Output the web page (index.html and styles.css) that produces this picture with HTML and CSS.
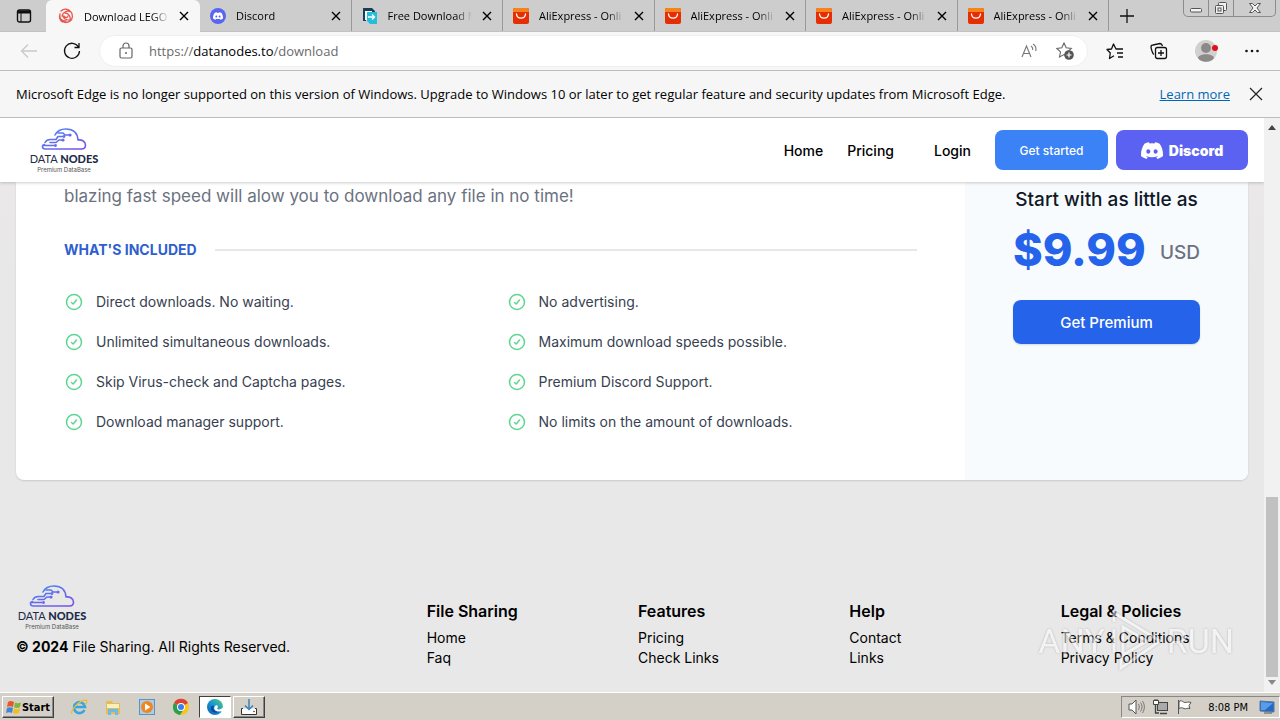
FILE: index.html
```html
<!DOCTYPE html>
<html lang="en">
<head>
<meta charset="utf-8">
<title>Download</title>
<meta name="viewport" content="width=device-width, initial-scale=1">
<link rel="stylesheet" href="styles.css">
</head>
<body>
<svg class="defs" aria-hidden="true">
  <defs>
    <linearGradient id="cloudGrad" x1="0" x2="1" y1="0" y2="1"><stop offset="0" stop-color="#4b8cf5"/><stop offset="1" stop-color="#7a4fe8"/></linearGradient>
    <linearGradient id="edgeGrad" x1="0" x2="1" y1="1" y2="0"><stop offset="0" stop-color="#0b5ab5"/><stop offset=".5" stop-color="#1795d8"/><stop offset="1" stop-color="#5ad06a"/></linearGradient>
  </defs>
  <symbol id="cloud" viewBox="0 0 46 22">
    <g fill="none" stroke="url(#cloudGrad)" stroke-width="1.600" stroke-linecap="round" stroke-linejoin="round">
      <path d="M14 7C16 3 20 1 25 1c7 0 11.500 4 12 11 4-.5 7.500 1.500 7.500 5 0 2.500-1.500 4-4 4H4c-3 0-3.500-4-.5-4.500"/>
      <path d="M2.500 17.500h12M4 14.500c1-2 3-3 5.500-3H15l2-3h5M9 14.500h6l3-2.500h4M17 5h5l2 2h5"/>
      <circle cx="23" cy="8.500" r=".6"/><circle cx="29" cy="7" r=".8"/><circle cx="22" cy="12" r=".8"/><circle cx="14.500" cy="17.500" r=".6"/>
    </g>
  </symbol>
  <symbol id="discord" viewBox="0 0 24 18">
    <path fill="currentColor" fill-rule="evenodd" d="M20.300 1.500A19.800 19.800 0 0 0 15.400 0l-.7 1.300a18.300 18.300 0 0 0-5.400 0L8.600 0a19.700 19.700 0 0 0-4.900 1.500C.6 6.200-.3 10.700.1 15.200a19.900 19.900 0 0 0 6 3l1.300-2-1.900-1 .4-.3c4 1.800 8.200 1.800 12.200 0l.4.300-1.900 1 1.300 2a19.800 19.800 0 0 0 6-3c.5-5.200-.8-9.700-3.600-13.700zM8 12.500c-1.200 0-2.200-1.100-2.200-2.500S6.800 7.600 8 7.600s2.200 1.100 2.200 2.400-1 2.500-2.200 2.500zm8 0c-1.200 0-2.200-1.100-2.200-2.500s1-2.400 2.200-2.400 2.200 1.100 2.200 2.400-1 2.500-2.200 2.500z"/>
  </symbol>
  <symbol id="close" viewBox="0 0 10 10"><path d="M1 1l8 8M9 1L1 9" fill="none" stroke="currentColor" stroke-width="1.400"/></symbol>
  <symbol id="ali" viewBox="0 0 16 16"><rect width="16" height="16" rx="2" fill="#e62e04"/><path d="M2 0h12a2 2 0 0 1 2 2v2H0V2a2 2 0 0 1 2-2z" fill="#f5841c"/><path d="M3.500 6c.5 5.500 8.500 5.500 9 0" fill="none" stroke="#fff" stroke-width="1.300" stroke-linecap="round"/></symbol>
  <symbol id="check" viewBox="0 0 20 20"><g fill="none" stroke="#5fd592" stroke-width="1.500" stroke-linecap="round" stroke-linejoin="round"><circle cx="10" cy="10" r="7.500"/><path d="M7.500 10.500l1.700 1.500 3.300-4"/></g></symbol>
</svg>

<div class="tabbar">
  <button class="tab-menu" aria-label="Tab actions"><svg width="16" height="16" viewBox="0 0 16 16"><rect x="1.500" y="2" width="13" height="12" rx="2" fill="none" stroke="#111" stroke-width="1.400"/><path d="M2 3h12v2H2zM5 5v9" fill="#111" stroke="#111"/></svg></button>
  <div class="tabs">
    <div class="tab active">
      <svg class="favicon" viewBox="0 0 16 16"><g fill="none" stroke="#e8564c" stroke-width="1.300" stroke-linecap="round"><path d="M3 3c3-3 8-2 10 1-4-2-8 0-9 4M1.500 8c0 3 1 5 3 6M13 4c2 3 2 7-1 9 1-4-1-8-5-8M6 14c3 1 6 0 8-3-3 2-8 1-9-3M2 6c-1 5 2 7 6 7M10 8c0 2-3 2-4 0M1.500 10c1 2 3 4 6 4.500"/></g></svg>
      <span class="tab-title">Download LEGO</span><button class="tab-close" aria-label="Close tab"><svg><use href="#close"/></svg></button>
    </div>
    <div class="tab">
      <svg class="favicon" viewBox="0 0 16 16"><circle cx="8" cy="8" r="8" fill="#5865f2"/><svg class="white" x="3" y="4" width="10" height="8"><use href="#discord"/></svg></svg>
      <span class="tab-title">Discord</span><button class="tab-close" aria-label="Close tab"><svg><use href="#close"/></svg></button>
    </div>
    <div class="tab">
      <svg class="favicon" viewBox="0 0 16 16"><path d="M1 0h9l3 3v2H4v8H1z" fill="#173f5c"/><path d="M3 3h7v2H5v7H3z" fill="#fff"/><path d="M5 4h10v12H8l-3-3z" fill="#23bfd8"/><path d="M6 9h7M10 6.500L12.500 9 10 11.500" fill="none" stroke="#fff" stroke-width="1.300"/></svg>
      <span class="tab-title">Free Download M</span><button class="tab-close" aria-label="Close tab"><svg><use href="#close"/></svg></button>
    </div>
    <div class="tab"><svg class="favicon"><use href="#ali"/></svg><span class="tab-title">AliExpress - Onli</span><button class="tab-close" aria-label="Close tab"><svg><use href="#close"/></svg></button></div>
    <div class="tab"><svg class="favicon"><use href="#ali"/></svg><span class="tab-title">AliExpress - Onli</span><button class="tab-close" aria-label="Close tab"><svg><use href="#close"/></svg></button></div>
    <div class="tab"><svg class="favicon"><use href="#ali"/></svg><span class="tab-title">AliExpress - Onli</span><button class="tab-close" aria-label="Close tab"><svg><use href="#close"/></svg></button></div>
    <div class="tab"><svg class="favicon"><use href="#ali"/></svg><span class="tab-title">AliExpress - Onli</span><button class="tab-close" aria-label="Close tab"><svg><use href="#close"/></svg></button></div>
  </div>
  <button class="new-tab" aria-label="New tab"><svg width="14" height="14" viewBox="0 0 14 14"><path d="M7 0v14M0 7h14" stroke="#111" stroke-width="1.300"/></svg></button>
  <div class="win-controls">
    <button aria-label="Minimize"><svg width="14" height="16" viewBox="0 0 14 16"><rect x="1.500" y="8.500" width="11" height="3.500" rx="1" fill="#f4f4f4" stroke="#555"/></svg></button>
    <button aria-label="Restore"><svg width="14" height="16" viewBox="0 0 14 16"><g fill="#f0f0f0" stroke="#555"><rect x="4.500" y="2.500" width="8" height="8" rx="1"/><rect x="1.500" y="5.500" width="8" height="8" rx="1"/><rect x="4" y="8" width="3" height="3"/></g></svg></button>
    <button class="wide" aria-label="Close"><svg width="14" height="16" viewBox="0 0 14 16"><path d="M1.500 3.500h3L7 6l2.500-2.500h3L9 8l3.500 4.500h-3L7 10l-2.500 2.500h-3L5 8z" fill="#f4f4f4" stroke="#555"/></svg></button>
  </div>
</div>

<div class="toolbar">
  <button class="tool back" aria-label="Back"><svg width="18" height="16" viewBox="0 0 18 16"><path d="M17 8H2M8 1.500L1.500 8 8 14.500" fill="none" stroke="#c9c9c9" stroke-width="1.300"/></svg></button>
  <button class="tool reload" aria-label="Reload"><svg width="18" height="18" viewBox="0 0 18 18"><path d="M15.500 5A7.500 7.500 0 1 0 16.500 9M16 1v4.500h-4.500" fill="none" stroke="#111" stroke-width="1.300"/></svg></button>
  <div class="address">
    <svg width="14" height="18" viewBox="0 0 14 18"><g fill="none" stroke="#666" stroke-width="1.200"><rect x="1" y="6" width="12" height="10" rx="1.500"/><path d="M4 6V4a3 3 0 0 1 6 0v2"/></g><circle cx="7" cy="11" r="1" fill="#666"/></svg>
    <div class="url" role="textbox" aria-label="Address">https://<b>datanodes.to</b>/download</div>
    <button class="tool" aria-label="Read aloud"><svg width="18" height="16" viewBox="0 0 18 16"><path d="M2 14L6.500 3 11 14M3.500 10.500h6M11 3c1.500 1 2 2.500 1.700 4M13 1c2.500 1.500 3.500 4 2.700 7" fill="none" stroke="#777" stroke-width="1.100"/></svg></button>
    <button class="tool" aria-label="Add to favorites"><svg width="18" height="18" viewBox="0 0 18 18"><path d="M8 1l2.200 4.800 5.100.6-3.800 3.500 1 5.100L8 12.600 3.500 15l1-5.100L.8 6.400l5-.6z" fill="none" stroke="#666" stroke-width="1.100"/><circle cx="13" cy="13" r="4.800" fill="#555"/><path d="M13 10.500v5M10.500 13h5" stroke="#fff" stroke-width="1.200"/></svg></button>
  </div>
  <div class="tools">
    <button class="tool" aria-label="Favorites"><svg width="18" height="17" viewBox="0 0 18 17"><path d="M11 6L10 6 7.500 1 5.500 6 1 6.500 4.300 10 3.500 15.500 8 12.800M10 6h7M11 10h6M12 14h5" fill="none" stroke="#111" stroke-width="1.300" stroke-linejoin="round"/></svg></button>
    <button class="tool" aria-label="Collections"><svg width="18" height="18" viewBox="0 0 18 18"><g fill="none" stroke="#111" stroke-width="1.300"><path d="M4 12.500C2.500 12 1 6 1 5s1-2 2-2l7-1.500c1.500 0 2 1 2.500 2.500"/><rect x="5.500" y="5.500" width="11" height="11" rx="2"/><path d="M11 8v6M8 11h6"/></g></svg></button>
    <button class="tool" aria-label="Profile"><svg width="24" height="24" viewBox="0 0 24 24"><circle cx="12" cy="12" r="11" fill="#d2d0ce"/><circle cx="12" cy="9" r="5" fill="#8c8a88"/><path d="M4 19c1-5 15-5 16 0-3 5-13 5-16 0z" fill="#8c8a88"/><circle cx="21" cy="9" r="3" fill="#e0101c"/></svg></button>
    <button class="tool" aria-label="Settings and more"><svg width="16" height="4" viewBox="0 0 16 4"><g fill="#111"><circle cx="2.500" cy="2" r="1.300"/><circle cx="8" cy="2" r="1.300"/><circle cx="13.500" cy="2" r="1.300"/></g></svg></button>
  </div>
</div>

<div class="infobar">
  <span>Microsoft Edge is no longer supported on this version of Windows. Upgrade to Windows 10 or later to get regular feature and security updates from Microsoft Edge.</span>
  <a href="#">Learn more</a>
  <button class="tool" aria-label="Dismiss"><svg width="14" height="14" viewBox="0 0 14 14"><path d="M1 1l12 12M13 1L1 13" stroke="#222" stroke-width="1.200"/></svg></button>
</div>

<div class="viewport">
  <div class="page">
    <header class="site-header">
      <a class="logo" href="#"><svg width="46" height="22"><use href="#cloud"/></svg><span class="logo-name">DATA <b>NODES</b></span><small>Premium DataBase</small></a>
      <nav class="nav">
        <a href="#">Home</a><a href="#">Pricing</a><a class="login" href="#">Login</a>
        <button class="btn started">Get started</button>
        <button class="btn discord"><svg width="22" height="17"><use href="#discord"/></svg>Discord</button>
      </nav>
    </header>

    <main class="card">
      <section class="plan">
        <p class="lead">blazing fast speed will alow you to download any file in no time!</p>
        <h4 class="included">WHAT'S INCLUDED</h4>
        <ul class="features">
          <li><svg><use href="#check"/></svg>Direct downloads. No waiting.</li>
          <li><svg><use href="#check"/></svg>No advertising.</li>
          <li><svg><use href="#check"/></svg>Unlimited simultaneous downloads.</li>
          <li><svg><use href="#check"/></svg>Maximum download speeds possible.</li>
          <li><svg><use href="#check"/></svg>Skip Virus-check and Captcha pages.</li>
          <li><svg><use href="#check"/></svg>Premium Discord Support.</li>
          <li><svg><use href="#check"/></svg>Download manager support.</li>
          <li><svg><use href="#check"/></svg>No limits on the amount of downloads.</li>
        </ul>
      </section>
      <aside class="price">
        <p class="price-intro">Start with as little as</p>
        <p class="amount"><strong>$9.99</strong><span>USD</span></p>
        <button class="btn premium">Get Premium</button>
      </aside>
    </main>

    <footer class="site-footer">
      <div class="brand">
        <a class="logo" href="#"><svg width="46" height="22"><use href="#cloud"/></svg><span class="logo-name">DATA <b>NODES</b></span><small>Premium DataBase</small></a>
        <p><b>© 2024</b> File Sharing. All Rights Reserved.</p>
      </div>
      <div class="links">
        <div><h5>File Sharing</h5><a href="#">Home</a><a href="#">Faq</a></div>
        <div><h5>Features</h5><a href="#">Pricing</a><a href="#">Check Links</a></div>
        <div><h5>Help</h5><a href="#">Contact</a><a href="#">Links</a></div>
        <div><h5>Legal &amp; Policies</h5><a href="#">Terms &amp; Conditions</a><a href="#">Privacy Policy</a></div>
      </div>
    </footer>
  </div>
  <div class="scrollbar">
    <svg width="8" height="5" viewBox="0 0 8 5"><path d="M0 5l4-5 4 5z" fill="#444"/></svg>
    <div class="track"><div class="thumb"></div></div>
    <svg width="8" height="5" viewBox="0 0 8 5"><path d="M0 0l4 5 4-5z" fill="#888"/></svg>
  </div>
  <div class="watermark"><span>ANY</span><svg width="54" height="62" viewBox="0 0 54 62"><path d="M5 12V3l46 28L12 58V46M5 19v24M14 17v28l24-14z" fill="none" stroke="#fff" stroke-width="3"/></svg><span>RUN</span></div>
</div>

<div class="taskbar">
  <button class="start"><svg width="16" height="15" viewBox="0 0 16 15"><path d="M2 2c2-1.500 4-1 6 0L7 7C5 6 3 6 1 7z" fill="#e8562a"/><path d="M9 2.500c2 1 4 1 6 0L14 7c-2 1.500-4 1-6 .3z" fill="#7cb83c"/><path d="M1 8c2-1 4-1 6 0l-1 5c-2-1-4-1-6 0z" fill="#3f86d8"/><path d="M8 8.500c2 1 4 1 6 0l-1 4.500c-2 1-4 1-6 0z" fill="#f5bd20"/></svg>Start</button>
  <div class="launch">
    <button aria-label="Internet Explorer"><svg width="18" height="18" viewBox="0 0 18 18"><path d="M14.500 12a5.500 5.500 0 1 1 .5-3H5" fill="none" stroke="#38a5e0" stroke-width="2.600"/><path d="M2 16C0 13 9 2 16 2c2 1 0 4-1 5" fill="none" stroke="#e7bd3c" stroke-width="1.300"/></svg></button>
    <button aria-label="Explorer"><svg width="18" height="18" viewBox="0 0 18 18"><path d="M2 3h6l1 2h7v11H2z" fill="#e3bd55"/><path d="M3 6h12v4H3z" fill="#fbf0b8"/><path d="M4 17v-6h10v6h-3v-3H7v3z" fill="#6fb9e4"/></svg></button>
    <button aria-label="Media Player"><svg width="18" height="18" viewBox="0 0 18 18"><rect x="1.500" y="1.500" width="15" height="15" fill="#a9cdea" stroke="#5b93c4"/><circle cx="9" cy="9" r="6" fill="#f0861c"/><path d="M7 5.500l5.500 3.500L7 12.500z" fill="#fff"/></svg></button>
    <button aria-label="Chrome"><svg width="18" height="18" viewBox="0 0 18 18"><circle cx="9" cy="9" r="8" fill="#f8c51c"/><path d="M9 9L2 5a8 8 0 0 1 14 0z" fill="#dd4335"/><path d="M9 9L2 5a8 8 0 0 0 6 12l4-6z" fill="#2da04f"/><circle cx="9" cy="9" r="4" fill="#fff"/><circle cx="9" cy="9" r="3" fill="#3d7fe8"/></svg></button>
    <button class="pressed" aria-label="Edge"><svg width="18" height="18" viewBox="0 0 18 18"><circle cx="9" cy="9" r="8" fill="url(#edgeGrad)"/><path d="M8 8c-2 3 1 6 7 5-2 2-8 3-10-1-1-3 1-5 3-4z" fill="#0c4a9c"/><path d="M9 8c2-2 4 1 2 3 2 1 5 0 6-2v4l-3 .5C9 14 7 11 9 8z" fill="#fff"/></svg></button>
    <button class="raised" aria-label="Downloads"><svg width="20" height="18" viewBox="0 0 20 18"><path d="M4 10.500H2.500v6h15v-6H16" fill="#fff" stroke="#333"/><path d="M10 1v10M6 7.500l4 4 4-4" fill="none" stroke="#3b82b8" stroke-width="1.500"/><circle cx="15" cy="13.500" r=".8" fill="#333"/></svg></button>
  </div>
  <div class="tray">
    <svg width="17" height="16" viewBox="0 0 17 16"><path d="M1 5h3l4-4v14l-4-4H1z" fill="#fff" stroke="#555"/><path d="M10.500 5c1 2 1 4 0 6M12.500 3.500c2 3 2 6 0 9M14.500 2c2.500 4 2.500 8 0 12" fill="none" stroke="#777"/></svg>
    <svg width="17" height="16" viewBox="0 0 17 16"><rect x="5.500" y="3.500" width="10" height="8" fill="#aaa" stroke="#444"/><path d="M8 14.500h7M3.500 6v8H7" fill="none" stroke="#444" stroke-width="1.300"/><path d="M1.500 1.500h5v4h-5zM3 0v2M5 0v2" fill="#fff" stroke="#444"/></svg>
    <svg width="17" height="16" viewBox="0 0 17 16"><path d="M2.500 1v14M3 2.500c3-2 4 1 6 1s3-1 6 0l-2 3 1 3c-3-1-4 1-6 0s-3-1-5 0z" fill="#fff" stroke="#555"/></svg>
    <time>8:08 PM</time>
    <svg width="16" height="14" viewBox="0 0 16 14"><path d="M1 1l14 1v10L1 11z" fill="#2468c8" stroke="#5b7898"/><path d="M2 2l12 1-8 7H2z" fill="#5a9cea"/><path d="M5 13h8" stroke="#555"/></svg>
  </div>
</div>
</body>
</html>
```

FILE: styles.css
```css
* { box-sizing: border-box; }
body {
  margin: 0;
  height: 100vh;
  display: flex;
  flex-direction: column;
  overflow: hidden;
  font-family: "Open Sans", "Noto Sans", sans-serif;
  font-size: 11px;
  color: #000;
}
button { border: 0; background: none; padding: 0; font: inherit; color: inherit; display: flex; align-items: center; justify-content: center; }
a { color: inherit; text-decoration: none; }
p, h4, h5, ul { margin: 0; padding: 0; }
svg { display: block; flex: none; }
.defs { position: absolute; width: 0; height: 0; }
.white { color: #fff; }

/* Browser chrome */
.tabbar { display: flex; height: 32px; flex: none; background: #cdcdcd; border-bottom: 1px solid #c2c2c2; }
.tab-menu { width: 48px; margin-right: -2px; }
.tabs { display: flex; flex: 1; max-width: 1063px; }
.tab { flex: 1; min-width: 0; display: flex; align-items: center; gap: 10px; padding: 0 10px; border-right: 1px solid #999; }
.tab.active { flex: 0 0 154px; padding: 0 11px 0 12px; height: 32px; background: #f7f7f7; border: 0; border-radius: 6px 6px 0 0; }
.favicon { width: 16px; height: 16px; }
.tab-title { flex: 1; overflow: hidden; white-space: nowrap; -webkit-mask-image: linear-gradient(90deg, #000 80%, transparent); mask-image: linear-gradient(90deg, #000 80%, transparent); }
.tab-close svg { width: 10px; height: 10px; }
.new-tab { width: 36px; }
.win-controls { display: flex; height: 17px; margin: 0 4px 0 auto; border: 1px solid #8c8c8c; border-top: 0; border-radius: 0 0 5px 5px; }
.win-controls button { width: 25px; border-right: 1px solid #8c8c8c; }
.win-controls .wide { width: 41px; border: 0; }

.toolbar { display: flex; align-items: center; flex: none; height: 39px; padding: 0 20px; background: #f7f7f7; border-bottom: 1px solid #bdbdbd; }
.reload { margin: 0 18px 0 25px; }
.address { flex: 1; display: flex; align-items: center; gap: 18px; height: 32px; padding: 0 13px 0 19px; border-radius: 16px; background: #fff; border: 1px solid #efefef; }
.url { flex: 1; margin-left: -2px; font-size: 13px; color: #6b6b6b; }
.url b { font-weight: 400; color: #000; }
.tools { display: flex; align-items: center; gap: 26px; margin-left: 18px; }
.infobar { display: flex; align-items: center; flex: none; height: 47px; padding: 0 17px 0 16px; background: #f6f6f6; border-bottom: 1px solid #bdbdbd; font-size: 13px; white-space: nowrap; }
.infobar a { margin-left: auto; color: #0067b8; text-decoration: underline; }
.infobar .tool { margin-left: 19px; }

/* Page */
.viewport { position: relative; display: flex; flex: 1; min-height: 0; font-family: Inter, sans-serif; }
.page { flex: 1; overflow: hidden; background: linear-gradient(#ebe8ea, #e8e8e8 40%); }
.site-header { position: relative; display: flex; align-items: center; justify-content: space-between; height: 64px; padding: 0 16px 0 28px; background: #fff; box-shadow: 0 1px 3px #0003; }
.logo { display: flex; flex-direction: column; align-items: center; width: 72px; font-family: Lato, sans-serif; color: #1d2c48; }
.logo-name { font-size: 11px; line-height: 18px; white-space: nowrap; }
.logo-name b { font-weight: 900; }
.logo small { font-family: Inter, sans-serif; font-size: 6px; line-height: 4px; color: #555; }
.nav { display: flex; align-items: center; font-size: 14px; font-weight: 500; }
.nav a { margin-right: 24px; }
.nav .login { margin-left: 16px; }
.btn { border-radius: 8px; color: #fff; }
.started { width: 113px; height: 40px; background: #3b82f6; font-size: 12px; font-weight: 500; }
.discord { width: 132px; height: 40px; margin-left: 8px; gap: 6px; background: #5b62f1; font-size: 14px; font-weight: 900; }

.card { display: flex; margin: 0 16px; background: #fff; border-radius: 0 0 8px 8px; overflow: hidden; box-shadow: 0 1px 2px #0002; }
.plan { flex: 1; padding: 0 48px 48px; }
.lead { font-size: 17px; line-height: 28px; color: #6b7280; }
.included { display: flex; align-items: center; gap: 18px; margin-top: 30px; font-size: 14px; line-height: 20px; font-weight: 700; color: #2f5fcf; }
.included::after { content: ""; flex: 1; height: 2px; background: #e5e7eb; }
.features { display: grid; grid-template-columns: 1fr 1fr; gap: 20px 32px; margin-top: 32px; list-style: none; font-size: 14px; line-height: 20px; color: #374151; }
.features li { display: flex; gap: 12px; }
.features svg { width: 20px; height: 20px; }
.price { width: 283px; padding: 4px 48px 0; background: #f8fbfe; white-space: nowrap; }
.price-intro { font-size: 19px; line-height: 28px; font-weight: 500; color: #111827; text-align: center; }
.amount { display: flex; align-items: center; justify-content: space-between; margin-top: 12px; height: 48px; }
.amount strong { font-size: 45px; line-height: 48px; font-weight: 800; color: #2563eb; }
.amount span { padding-top: 4px; font-size: 19px; font-weight: 500; color: #6b7280; }
.premium { width: 100%; height: 44px; margin-top: 26px; background: #2563eb; font-size: 15px; font-weight: 500; box-shadow: 0 1px 2px #0002; }

.site-footer { display: flex; padding: 105px 16px 0; font-size: 14px; line-height: 20px; }
.brand { flex: 0 0 33.33%; }
.brand p { margin-top: 8px; }
.links { flex: 1; display: grid; grid-template-columns: repeat(4, 1fr); gap: 24px; padding-top: 14px; white-space: nowrap; }
.links h5 { margin-bottom: 5px; font-size: 16px; line-height: 24px; font-weight: 600; }
.links a { display: block; }

.scrollbar { width: 16px; flex: none; display: flex; flex-direction: column; align-items: center; padding: 7px 0; gap: 3px; background: #f1f1f1; }
.track { flex: 1; width: 12px; display: flex; flex-direction: column; justify-content: flex-end; }
.thumb { height: 33%; background: #c1c1c1; }
.watermark { position: absolute; right: 46px; bottom: 20px; display: flex; align-items: center; gap: 4px; font-family: Roboto, sans-serif; font-size: 34px; line-height: 58px; color: #fff; opacity: .5; filter: drop-shadow(0 0 1px #888); pointer-events: none; }

/* Taskbar */
.taskbar { display: flex; align-items: center; flex: none; height: 28px; padding: 1px 0 0 2px; background: #d4d0c8; border-top: 1px solid #fff; font-family: "DejaVu Sans Condensed", "DejaVu Sans", sans-serif; font-size: 11px; }
.start, .raised { border: 1px solid; border-color: #fff #404040 #404040 #fff; box-shadow: inset -1px -1px #888; }
.start { width: 52px; height: 22px; font-weight: 700; font-size: 11px; }
.launch { display: flex; margin-left: 9px; gap: 2px; }
.launch button { width: 32px; height: 22px; }
.launch .pressed { background: #fff; border: 1px solid; border-color: #404040 #fff #fff #404040; }
.tray { display: flex; align-items: center; gap: 7px; height: 22px; margin-left: auto; padding: 0 4px 0 6px; border: 1px solid; border-color: #888 #fff #fff #888; }
.tray time { margin: 0 4px 0 8px; }
```
